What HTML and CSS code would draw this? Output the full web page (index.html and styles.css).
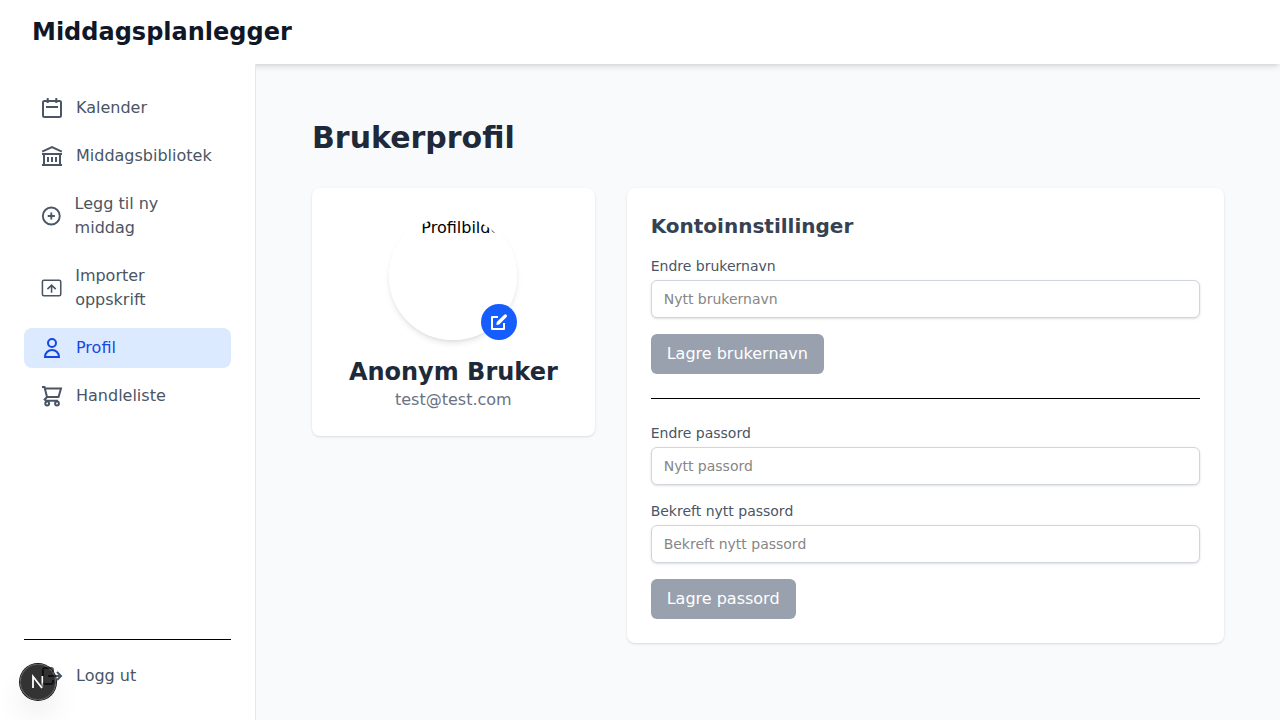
FILE: index.html
```html
<!DOCTYPE html>
<html lang="no">
<head>
<meta charset="utf-8">
<meta name="viewport" content="width=device-width, initial-scale=1">
<title>Middagsplanlegger</title>
<link rel="stylesheet" href="styles.css">
</head>
<body>
<div class="app">
  <header class="topbar"><div class="brand">Middagsplanlegger</div></header>
  <div class="shell">
    <aside class="sidebar">
      <nav class="nav">
        <a class="nav-link" href="#kalender">
          <svg class="icon" viewBox="0 0 24 24"><rect x="3" y="5" width="18" height="16" rx="1.5"/><path d="M7.700 2v5M16.300 2v5M6 11h12"/></svg>
          <span>Kalender</span>
        </a>
        <a class="nav-link" href="#bibliotek">
          <svg class="icon" viewBox="0 0 24 24"><path d="M2.2 7.6 12 3l9.800 4.600M2 10h20M4 10v11M20 10v11M2 21h20M8 13v5M12 13v5M16 13v5"/></svg>
          <span>Middagsbibliotek</span>
        </a>
        <a class="nav-link" href="#ny">
          <svg class="icon" viewBox="0 0 24 24"><circle cx="12" cy="12" r="9"/><path d="M12 8.200v7.600M8.200 12h7.600"/></svg>
          <span>Legg til ny middag</span>
        </a>
        <a class="nav-link" href="#importer">
          <svg class="icon icon-thin" viewBox="0 0 24 24"><rect x="2.500" y="4" width="19" height="16" rx="1.500"/><path d="M12 17V9M7.700 13.200 12 9l4.300 4.200"/></svg>
          <span>Importer oppskrift</span>
        </a>
        <a class="nav-link nav-active" href="#profil" aria-current="page">
          <svg class="icon" viewBox="0 0 24 24"><circle cx="12" cy="7" r="4"/><path d="M5 21c0-4 3-7 7-7s7 3 7 7z"/></svg>
          <span>Profil</span>
        </a>
        <a class="nav-link" href="#handleliste">
          <svg class="icon" viewBox="0 0 24 24"><path d="M2 3h2.500L7 13h11.500L21 4.500H5M7 13l-2.300 2.500 1.300 1.200h12"/><circle cx="7.200" cy="19.500" r="1.900"/><circle cx="17" cy="19.500" r="1.900"/></svg>
          <span>Handleliste</span>
        </a>
      </nav>
      <div class="logout">
        <button class="nav-link" type="button">
          <svg class="icon" viewBox="0 0 24 24"><path d="M13 8V6a2 2 0 0 0-2-2H5a2 2 0 0 0-2 2v12a2 2 0 0 0 2 2h6a2 2 0 0 0 2-2v-2M8 12h13M17 8l4 4-4 4"/></svg>
          <span>Logg ut</span>
        </button>
      </div>
    </aside>
    <main class="content">
      <h1 class="page-title">Brukerprofil</h1>
      <div class="grid">
        <section class="card profile">
          <div class="avatar-wrap">
            <div class="avatar"><span class="avatar-text">Profilbilde</span></div>
            <button class="edit" type="button" aria-label="Endre profilbilde">
              <svg class="edit-icon" viewBox="0 0 20 20"><path d="M9 5H3v12h12v-6"/><path class="pencil" d="m15.200 2.700a1.700 1.700 0 0 1 2.400 2.400L10.200 12.500 7.300 13l.5-2.900z"/></svg>
            </button>
          </div>
          <h2 class="name">Anonym Bruker</h2>
          <p class="email">test@test.com</p>
        </section>
        <section class="card settings">
          <h2 class="settings-title">Kontoinnstillinger</h2>
          <form class="form">
            <div class="field">
              <label class="label" for="username">Endre brukernavn</label>
              <input class="input" id="username" type="text" placeholder="Nytt brukernavn">
            </div>
            <button class="save" type="button" disabled>Lagre brukernavn</button>
          </form>
          <hr class="divider">
          <form class="form">
            <div class="field">
              <label class="label" for="password">Endre passord</label>
              <input class="input" id="password" type="password" placeholder="Nytt passord">
            </div>
            <div class="field">
              <label class="label" for="confirm">Bekreft nytt passord</label>
              <input class="input" id="confirm" type="password" placeholder="Bekreft nytt passord">
            </div>
            <button class="save" type="button" disabled>Lagre passord</button>
          </form>
        </section>
      </div>
    </main>
  </div>
</div>
<button class="dev-badge" type="button" aria-label="Utviklerverktøy">
  <svg class="dev-mark" viewBox="0 0 36 36"><defs><linearGradient id="fade" x1="0" y1="0" x2="0" y2="1"><stop offset=".5" stop-color="#fff"/><stop offset="1" stop-color="#fff" stop-opacity="0"/></linearGradient></defs><path d="M13 24V12.500L22 24" fill="none" stroke="#fff" stroke-width="1.800"/><path d="M21.500 12h1.700v12h-1.700z" fill="url(#fade)"/></svg>
</button>
</body>
</html>
```

FILE: styles.css
```css
*, *::before, *::after { box-sizing: border-box; }
body { margin: 0; font-family: "DejaVu Sans", sans-serif; font-size: 16px; line-height: 24px; color: #000; background: #f9fafb; }
h1, h2, p { margin: 0; }
button, input { font: inherit; }
.app { min-height: 100vh; display: flex; flex-direction: column; }
.topbar { padding: 16px 32px; background: #fff; box-shadow: 0 4px 6px -1px rgba(0,0,0,.1), 0 2px 4px -2px rgba(0,0,0,.1); z-index: 1; }
.brand { font-size: 24px; line-height: 32px; font-weight: 700; color: #101828; }
.shell { flex: 1; display: flex; }
.sidebar { width: 256px; flex-shrink: 0; display: flex; flex-direction: column; justify-content: space-between; padding: 24px; background: #fff; border-right: 1px solid #e5e7eb; z-index: 2; }
.nav { display: flex; flex-direction: column; gap: 8px; }
.nav-link { display: flex; align-items: center; gap: 12px; width: 100%; padding: 8px 16px; border: 0; border-radius: 8px; background: none; color: #4a5565; text-align: left; text-decoration: none; }
.nav-active { background: #dbeafe; color: #1447e6; }
.icon { width: 24px; height: 24px; fill: none; stroke: currentColor; stroke-width: 2; }
.icon-thin { stroke-width: 1.6; }
.logout { border-top: 1px solid #000; padding-top: 16px; }
.content { flex: 1; min-width: 0; padding: 56px; }
.page-title { margin-bottom: 32px; font-size: 30px; line-height: 36px; font-weight: 700; color: #1e2939; }
.grid { display: grid; grid-template-columns: repeat(3, minmax(0, 1fr)); gap: 32px; align-items: start; }
.card { padding: 24px; background: #fff; border-radius: 8px; box-shadow: 0 1px 3px rgba(0,0,0,.1), 0 1px 2px -1px rgba(0,0,0,.1); }
.profile { display: flex; flex-direction: column; align-items: center; text-align: center; }
.avatar-wrap { position: relative; margin-bottom: 16px; }
.avatar { width: 128px; height: 128px; padding-left: 12px; overflow: hidden; border: 4px solid #fff; border-radius: 50%; text-align: left; white-space: nowrap; box-shadow: 0 4px 6px -1px rgba(0,0,0,.1), 0 2px 4px -2px rgba(0,0,0,.1); }
.avatar-text { padding-left: 16px; }
.edit { position: absolute; right: 0; bottom: 0; display: flex; padding: 8px; border: 0; border-radius: 50%; background: #155dfc; color: #fff; }
.edit-icon { width: 20px; height: 20px; fill: none; stroke: currentColor; stroke-width: 2; stroke-linejoin: round; }
.pencil { fill: currentColor; stroke: none; }
.name { font-size: 24px; line-height: 32px; font-weight: 700; color: #1e2939; white-space: nowrap; }
.email { color: #6a7282; }
.settings { grid-column: span 2; }
.settings-title { margin-bottom: 16px; font-size: 20px; line-height: 28px; font-weight: 600; color: #364153; }
.form { display: flex; flex-direction: column; align-items: flex-start; gap: 16px; }
.field { display: flex; flex-direction: column; gap: 4px; width: 100%; }
.label { font-size: 14px; line-height: 20px; color: #4a5565; }
.input { width: 100%; height: 38px; padding: 8px 12px; border: 1px solid #d1d5dc; border-radius: 6px; background: #fff; font-size: 14px; line-height: 20px; box-shadow: 0 1px 3px rgba(0,0,0,.1), 0 1px 2px -1px rgba(0,0,0,.1); }
.input::placeholder { color: #868686; opacity: 1; }
.save { padding: 8px 16px; border: 0; border-radius: 6px; background: #99a1af; color: #fff; }
.divider { margin: 24px 0; border: 0; border-top: 1px solid #000; }
.dev-badge { position: fixed; left: 20px; bottom: 20px; z-index: 3; width: 36px; height: 36px; padding: 0; border: 0; border-radius: 50%; background: rgba(0,0,0,.8); box-shadow: 0 0 0 1px #171717, inset 0 0 0 1px rgba(255,255,255,.14), 0 16px 32px -8px rgba(0,0,0,.24); }
.dev-mark { display: block; width: 36px; height: 36px; }
```
